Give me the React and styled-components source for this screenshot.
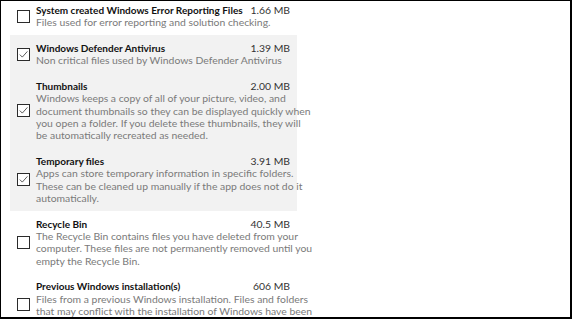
import React from 'react'
import styled, { createGlobalStyle } from 'styled-components'

const GlobalStyle = createGlobalStyle`
  html, body {
    margin: 0;
    padding: 0;
    background: #fff;
  }
`

const Frame = styled.div`
  box-sizing: border-box;
  width: 572px;
  height: 319px;
  overflow: hidden;
  background: #fff;
  border-style: solid;
  border-color: #000;
  border-width: 1px 2px 2px 1px;
  font-family: 'Segoe UI', Lato, 'Noto Sans', sans-serif;
`

const List = styled.div`
  width: 287px;
  margin: -3.5px 0 0 9px;
  display: flex;
  flex-direction: column;
`

const Row = styled.div`
  display: flex;
  align-items: center;
  gap: 6px;
  padding: 6.67px 7px;
  background: ${p => (p.$selected ? '#f2f2f2' : 'transparent')};
`

const Box = styled.span`
  box-sizing: border-box;
  flex: none;
  width: 13px;
  height: 13px;
  border: 1.5px solid #2b2b2b;
  display: flex;
  align-items: center;
  justify-content: center;
  background: #fff;
`

const Body = styled.div`
  flex: 1;
  min-width: 0;
  font-size: 10.4px;
  line-height: 12.33px;
`

const Head = styled.div`
  display: flex;
  justify-content: space-between;
  align-items: baseline;
  white-space: nowrap;
`

const Title = styled.span`
  font-size: 10px;
  font-weight: 700;
  color: #111;
`

const Size = styled.span`
  color: #333;
`

const Desc = styled.div`
  color: #7a7a7a;
  white-space: nowrap;
`

const items = [
  {
    title: 'System created Windows Error Reporting Files',
    size: '1.66 MB',
    lines: ['Files used for error reporting and solution checking.'],
  },
  {
    title: 'Windows Defender Antivirus',
    size: '1.39 MB',
    checked: true,
    lines: ['Non critical files used by Windows Defender Antivirus'],
  },
  {
    title: 'Thumbnails',
    size: '2.00 MB',
    checked: true,
    lines: [
      'Windows keeps a copy of all of your picture, video, and',
      'document thumbnails so they can be displayed quickly when',
      'you open a folder. If you delete these thumbnails, they will',
      'be automatically recreated as needed.',
    ],
  },
  {
    title: 'Temporary files',
    size: '3.91 MB',
    checked: true,
    lines: [
      'Apps can store temporary information in specific folders.',
      'These can be cleaned up manually if the app does not do it',
      'automatically.',
    ],
  },
  {
    title: 'Recycle Bin',
    size: '40.5 MB',
    lines: [
      'The Recycle Bin contains files you have deleted from your',
      'computer. These files are not permanently removed until you',
      'empty the Recycle Bin.',
    ],
  },
  {
    title: 'Previous Windows installation(s)',
    size: '606 MB',
    lines: [
      'Files from a previous Windows installation.  Files and folders',
      'that may conflict with the installation of Windows have been',
      'moved to folders named Windows.old.',
    ],
  },
]

const Check = () => (
  <svg width="9" height="9" viewBox="0 0 9 9">
    <path d="M0.8 4.6 L3.3 7.1 L8.4 1.4" fill="none" stroke="#333" strokeWidth="0.8" />
  </svg>
)

const App = () => (
  <Frame>
    <GlobalStyle />
    <List>
      {items.map(item => (
        <Row key={item.title} $selected={item.checked}>
          <Box>{item.checked && <Check />}</Box>
          <Body>
            <Head>
              <Title>{item.title}</Title>
              <Size>{item.size}</Size>
            </Head>
            {item.lines.map(line => (
              <Desc key={line}>{line}</Desc>
            ))}
          </Body>
        </Row>
      ))}
    </List>
  </Frame>
)

export default App
